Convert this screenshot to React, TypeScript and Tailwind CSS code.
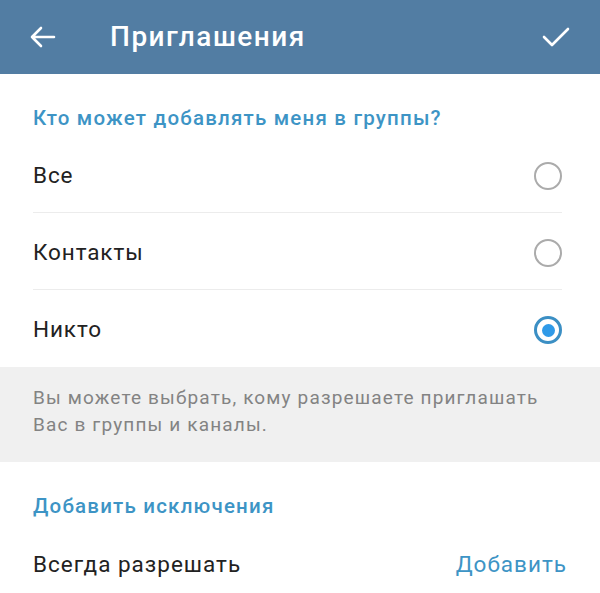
import { useState } from "react";

const options = ["Все", "Контакты", "Никто"];

function Radio({ checked }: { checked: boolean }) {
    return (
        <span
            className={`flex h-[28px] w-[28px] items-center justify-center rounded-full ${
                checked ? "border-[3px] border-[#3b8fc4]" : "border-[2.5px] border-[#ababab]"
            }`}
        >
            {checked && <span className="h-[13px] w-[13px] rounded-full bg-[#2f9ae8]" />}
        </span>
    );
}

export default function App() {
    const [selected, setSelected] = useState(2);

    return (
        <div className="w-[600px] h-[593px] overflow-hidden bg-white font-['Roboto','Noto_Sans',sans-serif]">
            <header className="flex h-[74px] items-center bg-[#527da3] pl-[30px] pr-[30px] text-white">
                <svg width="26" height="22" viewBox="0 0 26 22" fill="none" stroke="white" strokeWidth="2.6" strokeLinecap="round" strokeLinejoin="round">
                    <path d="M24 11H2M11 2L2 11l9 9" />
                </svg>
                <h1 className="ml-[54px] text-[28px] font-medium tracking-[1.5px]">Приглашения</h1>
                <svg className="ml-auto" width="28" height="22" viewBox="0 0 28 22" fill="none" stroke="white" strokeWidth="2.6" strokeLinecap="round" strokeLinejoin="round">
                    <path d="M2 11l8 8L26 3" />
                </svg>
            </header>

            <section className="pt-[32px]">
                <h2 className="pl-[33px] text-[20.5px] font-medium leading-[24px] tracking-[1.2px] text-[#3d94c5]">
                    Кто может добавлять меня в группы?
                </h2>
                <div className="mt-[6px]">
                    {options.map((opt, i) => (
                        <button
                            key={opt}
                            onClick={() => setSelected(i)}
                            className="flex h-[77px] w-full items-center pl-[33px] pr-[38px] text-left"
                        >
                            <div
                                className={`flex h-full w-full items-center justify-between pt-[3px] ${
                                    i < options.length - 1 ? "border-b border-[#ececec]" : ""
                                }`}
                            >
                                <span className="text-[22.5px] tracking-[0.9px] text-[#222]">{opt}</span>
                                <Radio checked={selected === i} />
                            </div>
                        </button>
                    ))}
                </div>
            </section>

            <div className="h-[95px] bg-[#f0f0f0] pl-[33px] pr-[10px] pt-[17px] text-[19px] leading-[27px] tracking-[1.15px] text-[#838383]">
                Вы можете выбрать, кому разрешаете приглашать
                <br />
                Вас в группы и каналы.
            </div>

            <section className="pt-[32px]">
                <h2 className="pl-[33px] text-[20.5px] font-medium leading-[24px] tracking-[1.2px] text-[#3d94c5]">
                    Добавить исключения
                </h2>
                <div className="mt-[30px] flex items-center justify-between pl-[33px] pr-[33px]">
                    <span className="text-[22.5px] tracking-[1px] text-[#222]">Всегда разрешать</span>
                    <span className="text-[22.5px] tracking-[1px] text-[#3d94c5]">Добавить</span>
                </div>
            </section>
        </div>
    );
}
